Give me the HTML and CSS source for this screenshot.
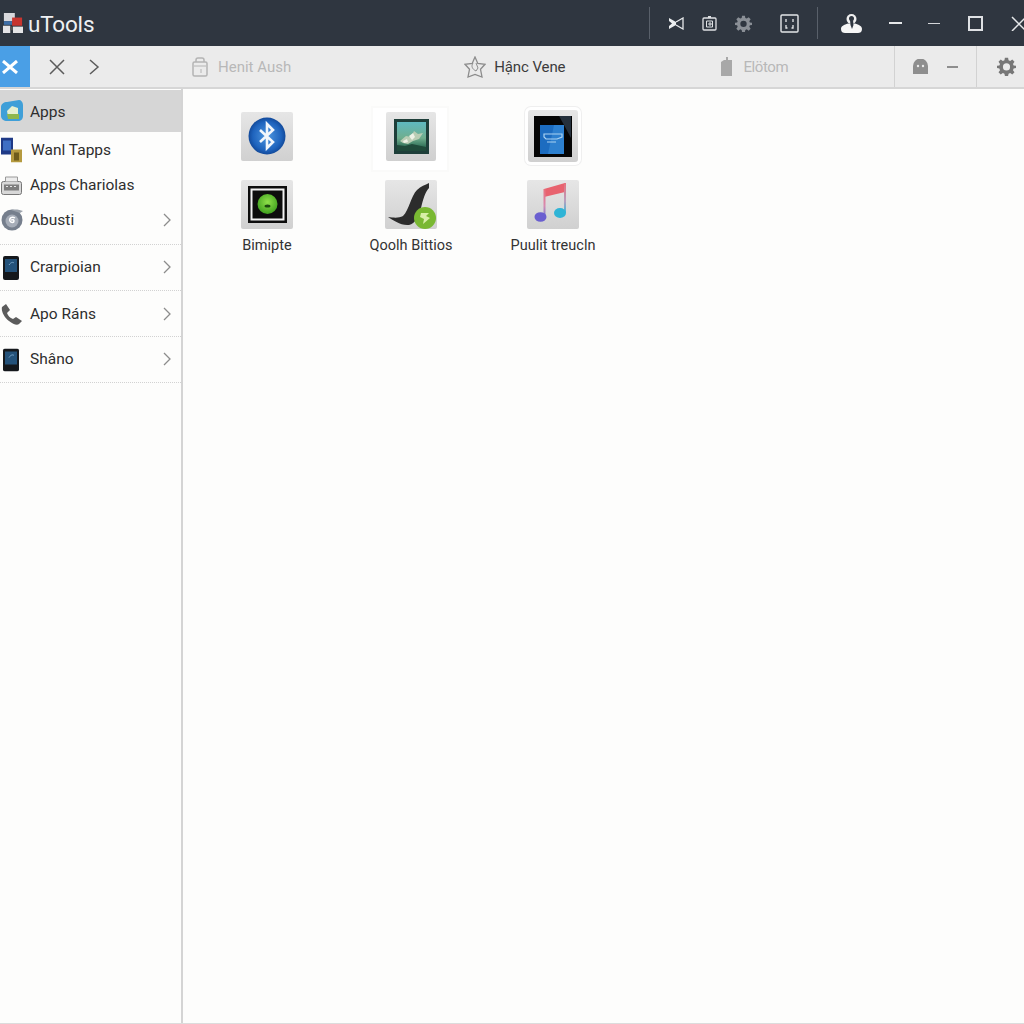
FILE: index.html
```html
<!DOCTYPE html>
<html lang="en">
<head>
<meta charset="utf-8">
<title>uTools</title>
<link rel="stylesheet" href="styles.css">
</head>
<body>
<div class="app">
  <header class="titlebar">
    <div class="brand">
      <svg class="logo" width="20" height="20" viewBox="0 0 22 22"><rect x="1" y="0" width="12" height="9" fill="#d8d8dc"/><rect x="1" y="9" width="9" height="4" fill="#3e6fa8"/><rect x="10" y="5" width="11" height="9" fill="#c8352f"/><rect x="0" y="14" width="8" height="8" fill="#e4e4e6"/><rect x="11" y="15" width="11" height="7" fill="#e4e4e6"/><rect x="8" y="15" width="3" height="4" fill="#555"/></svg>
      <span class="brand-name">uTools</span>
    </div>
    <div class="title-tools">
      <span class="vline"></span>
      <svg class="t1" width="16" height="13" viewBox="0 0 16 13"><path d="M1 1l7 4v3l-7 4V9l3-2.500L1 4z" fill="#eceef0"/><path d="M8 5l7-4v11L8 8" fill="none" stroke="#e6e8ea" stroke-width="1.300"/></svg>
      <svg class="t2" width="15" height="16" viewBox="0 0 15 16"><rect x="1" y="3" width="13" height="12" rx="1" fill="none" stroke="#dfe1e4" stroke-width="1.300"/><path d="M4.500 6h6v6h-6zM7 8h2v2H7z" fill="none" stroke="#dfe1e4"/><path d="M6 1h3v2H6z" fill="#dfe1e4"/></svg>
      <svg class="t3" width="17" height="17" viewBox="0 0 24 24"><path fill="#8a8f96" fill-rule="evenodd" d="M10 1h4l.6 3.200 2 .8L19.300 3.200l2.800 2.800L20.200 8.700l.8 2L24 11v3l-3 .6-.8 2 1.900 2.700-2.800 2.800-2.700-1.900-2 .8L14 24h-4l-.6-3-2-.8-2.700 1.900-2.800-2.800 1.900-2.700-.8-2L0 14v-3l3-.3.8-2L1.900 6l2.800-2.800L7.400 5l2-.8zM12 8a4.500 4.500 0 1 0 0 9 4.500 4.500 0 0 0 0-9z"/></svg>
      <svg class="t4" width="19" height="19" viewBox="0 0 19 19"><rect x="1" y="1" width="17" height="17" rx="1" fill="none" stroke="#e4e6e8" stroke-width="1.400"/><path d="M6 5v3M13 5v3M6 11v3h1.500M13 11v3h-1.500" stroke="#e4e6e8" stroke-width="1.300" fill="none"/></svg>
      <span class="vline vline2"></span>
      <svg class="t5" width="23" height="19" viewBox="0 0 23 19"><path d="M1 15c0-3 3-4 7-5.500h7c4 1.500 7 2.500 7 5.500 0 3-2 4-4 4H5c-2 0-4-1-4-4z" fill="#f6f6f6"/><ellipse cx="11.500" cy="5" rx="5" ry="5" fill="#f0f0f0"/><ellipse cx="11.500" cy="4.500" rx="2.500" ry="2.500" fill="#2f3640"/><path d="M10 6h3l.5 5-1.500 4-1.500-4z" fill="#2f3640"/></svg>
      <span class="dash"></span>
      <span class="dash2"></span>
      <span class="square"></span>
      <svg class="close" width="15" height="15" viewBox="0 0 15 15"><path d="M1 1l14 14M15 1L1 15" stroke="#e6e8ea" stroke-width="1.500"/></svg>
    </div>
  </header>

  <nav class="toolbar">
    <div class="close-tab"><svg width="16" height="14" viewBox="0 0 16 14"><path d="M1 1l14 12M15 1L1 13" stroke="#fff" stroke-width="3"/></svg></div>
    <svg class="nav-x" width="16" height="16" viewBox="0 0 16 16"><path d="M1 1l14 14M15 1L1 15" stroke="#5b5b5b" stroke-width="1.500"/></svg>
    <svg class="nav-next" width="11" height="16" viewBox="0 0 11 16"><path d="M1 1l8 7-8 7" fill="none" stroke="#5b5b5b" stroke-width="1.500"/></svg>
    <div class="tab tab-a">
      <svg width="16" height="20" viewBox="0 0 16 20"><path d="M4 5V3a2 2 0 0 1 2-2h4a2 2 0 0 1 2 2v2" fill="none" stroke="#b4b4b4" stroke-width="1.500"/><rect x="1" y="5" width="14" height="14" rx="1.500" fill="none" stroke="#b4b4b4" stroke-width="1.500"/><path d="M2 9h12M9 12v4" stroke="#b4b4b4"/></svg>
      <span class="faded">Henit Aush</span>
    </div>
    <div class="tab tab-b">
      <svg width="22" height="22" viewBox="0 0 22 22"><path d="M11 1l2.800 6.500L21 8.300l-4.500 5L18 21l-7-2.500L4 21l1.500-7.700L1 8.300l7.200-.8z" fill="none" stroke="#8c8c8c" stroke-width="1.300"/><path d="M9 7c-2 3-1 6 3 8l2-3-2-5" fill="none" stroke="#8c8c8c"/></svg>
      <span>Hậnc Vene</span>
    </div>
    <div class="tab tab-c">
      <svg width="13" height="20" viewBox="0 0 13 20"><path d="M6 0h2v3H6z" fill="#a8a8a8"/><path d="M1 5l3-2h8v16H1z" fill="#a8a8a8"/></svg>
      <span class="faded">Elötom</span>
    </div>
    <div class="tool-end">
      <svg width="15" height="15" viewBox="0 0 15 15"><path d="M0 15V7a7.500 7.500 0 0 1 15 0v8z" fill="#8e8e8e"/><circle cx="5" cy="7" r="1.200" fill="#ebebeb"/><circle cx="10" cy="7" r="1.200" fill="#ebebeb"/></svg>
      <span class="mini-dash"></span>
    </div>
    <div class="tool-gear">
      <svg width="19" height="19" viewBox="0 0 24 24"><path fill="#777" fill-rule="evenodd" d="M10 1h4l.6 3.200 2 .8L19.300 3.200l2.800 2.800L20.200 8.700l.8 2L24 11v3l-3 .6-.8 2 1.900 2.700-2.800 2.800-2.700-1.900-2 .8L14 24h-4l-.6-3-2-.8-2.700 1.900-2.800-2.800 1.900-2.700-.8-2L0 14v-3l3-.3.8-2L1.900 6l2.800-2.800L7.400 5l2-.8zM12 8a4.500 4.500 0 1 0 0 9 4.500 4.500 0 0 0 0-9z"/></svg>
    </div>
  </nav>

  <div class="main">
    <aside class="sidebar">
      <div class="row row-active">
        <svg class="ico" width="22" height="22" viewBox="0 0 22 22"><path d="M0 7c0-3 3-5 6-5l12-2c2 0 4 2 4 5v11c0 3-2 5-5 5H6c-3 0-6-2-6-5z" fill="#3f9fd8"/><path d="M6 11l5-5 6 2v8H7z" fill="#e6efd0"/><path d="M6 14h12v5H7z" fill="#8fb74c"/></svg>
        <span>Apps</span>
      </div>
      <div class="row row-wanl">
        <svg class="ico" width="22" height="25" viewBox="0 0 22 25"><rect x="0" y="0" width="12" height="17" fill="#1f3a86"/><rect x="2" y="3" width="8" height="10" fill="#3f6fc4"/><rect x="10" y="12" width="11" height="13" fill="#b59a3f"/><rect x="13" y="15" width="5" height="8" fill="#6f5c1c"/></svg>
        <span class="wanl-text">Wanl Tapps</span>
      </div>
      <div class="row row-charts">
        <svg class="ico" width="21" height="21" viewBox="0 0 21 21"><rect x="0.500" y="7" width="20" height="13" rx="2" fill="#d8d8d8" stroke="#777"/><rect x="3" y="10" width="15" height="6" fill="#7d7d7d"/><path d="M4.500 7V2.500h12V7" fill="#ececec" stroke="#999"/><path d="M5 12h2M9 12h2M13 12h2" stroke="#e6e6e6"/></svg>
        <span>Apps Chariolas</span>
      </div>
      <div class="row row-abusti">
        <svg class="ico" width="22" height="22" viewBox="0 0 22 22"><circle cx="11" cy="11" r="10.500" fill="#767f8d"/><path d="M10 1c5-1 9 0 12 1l-3 2z" fill="#9aa1ab"/><circle cx="11" cy="12" r="6.500" fill="#a6adb8"/><path d="M14 9c-3-2-6 0-5 3 1 2 4 2 4 0s-2-1-3-1" fill="none" stroke="#fff" stroke-width="1.500"/></svg>
        <span>Abusti</span>
        <svg class="chev" width="9" height="14" viewBox="0 0 9 14"><path d="M1 1l6 6-6 6" fill="none" stroke="#8c8c8c" stroke-width="1.300"/></svg>
      </div>
      <div class="row row-rule row-c">
        <svg class="ico" width="19" height="24" viewBox="0 0 19 24"><rect x="2" y="0" width="16" height="24" rx="2" fill="#15181c"/><rect x="4" y="3" width="12" height="13" fill="#24527a"/><path d="M8 9c2-3 4-3 5-2" stroke="#79a6c9" fill="none"/></svg>
        <span>Crarpioian</span>
        <svg class="chev" width="9" height="14" viewBox="0 0 9 14"><path d="M1 1l6 6-6 6" fill="none" stroke="#8c8c8c" stroke-width="1.300"/></svg>
      </div>
      <div class="row row-rule row-c">
        <svg class="ico" width="22" height="22" viewBox="0 0 22 22"><path d="M1 4l4-3 4 6-3 3c1 3 3 5 6 6l3-2 6 4-3 3c-2 2-6 0-10-3C3 14 0 8 1 4z" fill="#5c5c5c"/></svg>
        <span>Apo Ráns</span>
        <svg class="chev" width="9" height="14" viewBox="0 0 9 14"><path d="M1 1l6 6-6 6" fill="none" stroke="#8c8c8c" stroke-width="1.300"/></svg>
      </div>
      <div class="row row-rule row-c">
        <svg class="ico" width="19" height="23" viewBox="0 0 19 23"><rect x="2" y="0" width="16" height="23" rx="2" fill="#15181c"/><rect x="4" y="3" width="12" height="13" fill="#24527a"/><path d="M8 9c2-3 4-3 5-2" stroke="#79a6c9" fill="none"/></svg>
        <span>Shâno</span>
        <svg class="chev" width="9" height="14" viewBox="0 0 9 14"><path d="M1 1l6 6-6 6" fill="none" stroke="#8c8c8c" stroke-width="1.300"/></svg>
      </div>
    </aside>

    <main class="content">
      <div class="grid">
        <div class="cell">
          <div class="tile">
            <svg class="bt-icon" width="38" height="38" viewBox="0 0 38 38"><defs><radialGradient id="bt" cx="50%" cy="50%" r="55%"><stop offset="0" stop-color="#4f97e0"/><stop offset=".7" stop-color="#1e63bd"/><stop offset="1" stop-color="#0d3f8c"/></radialGradient></defs><circle cx="19" cy="19" r="18.500" fill="url(#bt)"/><path d="M12 13l13 12-6 6V7l6 6-13 12" fill="none" stroke="#f2f6fb" stroke-width="2.600"/></svg>
          </div>
        </div>
        <div class="cell">
          <div class="tile tile-halo">
            <svg width="35" height="35" viewBox="0 0 35 35"><defs><linearGradient id="sky" x1="0" y1="0" x2="0" y2="1"><stop offset="0" stop-color="#5fb9c0"/><stop offset=".55" stop-color="#6fae8e"/><stop offset="1" stop-color="#14543f"/></linearGradient></defs><rect width="35" height="35" fill="#1e3f3a"/><rect x="3" y="3" width="29" height="29" fill="url(#sky)"/><path d="M6 22l6-5 5 1 3-6 4 3 5-1-4 6-6 2-5 3-5-1z" fill="#b9cdb4"/><path d="M15 17l4-3 2 4-3 3zM9 22l4-2 1 3-4 1z" fill="#eef2e6"/><path d="M3 26l8 1 7-2 14 3v4H3z" fill="#1f4a3a"/></svg>
          </div>
        </div>
        <div class="cell">
          <div class="tile tile-ring">
            <svg width="38" height="41" viewBox="0 0 38 41"><rect width="38" height="41" fill="#050505"/><path d="M25 0h12v22L30 9z" fill="#25303c"/><path d="M6 9h19l5-0v29H6z" fill="#1c6cc0"/><path d="M20 9h10v29H14z" fill="#2d80cf"/><path d="M10 18h18v3l-5 2H12l-2-2zM13 26h9" fill="none" stroke="#a9d2f2" stroke-width="1.200"/></svg>
          </div>
        </div>
        <div class="cell">
          <div class="tile">
            <svg width="39" height="37" viewBox="0 0 39 37"><defs><radialGradient id="gr" cx="50%" cy="40%" r="60%"><stop offset="0" stop-color="#8fe04a"/><stop offset="1" stop-color="#3fa01e"/></radialGradient></defs><rect width="39" height="37" fill="#0d0d0d"/><rect x="3.500" y="3.500" width="32" height="30" fill="none" stroke="#f2f2f2" stroke-width="2"/><circle cx="19.500" cy="18" r="10" fill="url(#gr)"/><ellipse cx="19.500" cy="20" rx="3" ry="1.600" fill="#1d4a10"/></svg>
          </div>
          <span class="label">Bimipte</span>
        </div>
        <div class="cell">
          <div class="tile">
            <svg width="52" height="50" viewBox="0 0 52 50"><path d="M3 37c7 1 11 1 15-1 6-6 8-20 14-26 4-4 8-5 12-7v5c-4 4-6 12-8 20-2 8-6 16-12 17-8 1-16-5-21-8z" fill="#2c2c2c"/><circle cx="40" cy="38" r="11" fill="#79b832"/><path d="M36 33h8l-3 3 4 2-7 6 1-5-4-2z" fill="#d8eea8"/></svg>
          </div>
          <span class="label">Qoolh Bittios</span>
        </div>
        <div class="cell">
          <div class="tile">
            <svg width="52" height="50" viewBox="0 0 52 50"><defs><linearGradient id="st" x1="0" y1="0" x2="0" y2="1"><stop offset="0" stop-color="#e8707c"/><stop offset=".6" stop-color="#d88bb0"/><stop offset="1" stop-color="#6f80d8"/></linearGradient><linearGradient id="st2" x1="0" y1="0" x2="0" y2="1"><stop offset="0" stop-color="#e8707c"/><stop offset=".6" stop-color="#b8a0c0"/><stop offset="1" stop-color="#3fb8d8"/></linearGradient></defs><path d="M17 9l21-6v9l-21 5z" fill="#e8636f"/><rect x="16.500" y="9" width="2" height="28" fill="url(#st)"/><rect x="37" y="3" width="2" height="30" fill="url(#st2)"/><ellipse cx="13.500" cy="37" rx="6" ry="4.800" fill="#6a5fd0"/><ellipse cx="33" cy="33" rx="6" ry="5" fill="#2fb4d6"/></svg>
          </div>
          <span class="label">Puulit treucln</span>
        </div>
      </div>
    </main>
  </div>
</div>
</body>
</html>
```
FILE: styles.css
```css
* { box-sizing: border-box; }
html, body { margin: 0; height: 100%; }
body { font-family: Roboto, "Liberation Sans", sans-serif; color: #2e2e2e; background: #fdfdfc; overflow: hidden; }
.app { display: flex; flex-direction: column; height: 1024px; width: 1024px; }

.titlebar { height: 46px; flex: none; background: #2f3640; display: flex; align-items: center; }
.brand { display: flex; align-items: center; gap: 5px; padding-left: 3px; }
.brand-name { font-size: 22.500px; color: #eef0f2; font-weight: 400; letter-spacing: -0.2px; padding-top: 2px; }
.title-tools { margin-left: auto; display: flex; align-items: center; height: 100%; width: 375px; flex: none; overflow: hidden; }
.vline { width: 1px; height: 32px; background: #59606a; flex: none; }
.t1 { margin-left: 18px; flex: none; }
.t2 { margin-left: 18px; flex: none; }
.t3 { margin-left: 18px; flex: none; }
.t4 { margin-left: 28px; flex: none; }
.vline2 { margin-left: 18px; }
.t5 { margin-left: 22px; flex: none; }
.dash { width: 13px; height: 2px; background: #e6e8ea; margin-left: 26px; flex: none; }
.dash2 { width: 12px; height: 1px; background: #d4d6d9; margin-left: 26px; flex: none; }
.square { width: 15px; height: 15px; border: 2px solid #dfe1e4; margin-left: 28px; flex: none; }
.close { margin-left: 28px; flex: none; }

.toolbar { height: 43px; flex: none; background: #ebebeb; border-bottom: 2px solid #d6d6d6; display: flex; align-items: center; font-size: 15px; }
.close-tab { width: 30px; height: 100%; background: #4a9fe6; display: flex; align-items: center; justify-content: center; padding-right: 10px; flex: none; }
.nav-x { margin-left: 19px; flex: none; }
.nav-next { margin-left: 24px; flex: none; }
.tab { display: flex; align-items: center; gap: 10px; flex: none; }
.tab-a { margin-left: 92px; }
.tab-b { margin-left: 173px; gap: 8px; color: #3c3c3c; letter-spacing: -0.1px; }
.tab-c { margin-left: 155px; letter-spacing: -0.4px; }
.faded { color: #b8b8b8; }
.tool-end { margin-left: auto; width: 82px; height: 100%; border-left: 1px solid #d2d2d2; display: flex; align-items: center; gap: 19px; padding-left: 18px; flex: none; }
.mini-dash { width: 11px; height: 2px; background: #8e8e8e; }
.tool-gear { width: 48px; height: 100%; border-left: 1px solid #d2d2d2; display: flex; align-items: center; padding-left: 20px; flex: none; }

.main { flex: 1; display: flex; min-height: 0; border-bottom: 1px solid #dcdcdc; }
.sidebar { width: 183px; flex: none; background: #fdfdfc; border-right: 2px solid #d4d4d4; padding-top: 1px; font-size: 15.500px; }
.row { display: flex; align-items: center; padding-right: 9px; position: relative; }
.row span { margin-left: 30px; flex: 1; }
.ico { position: absolute; left: 1px; top: 50%; transform: translateY(-50%); }
.row-active { height: 42px; background: #d6d6d6; padding-top: 1px; }
.row-wanl { height: 36px; }
.row-charts { height: 34px; }
.row-abusti { height: 36px; margin-bottom: 6px; }
.wanl-text { margin-left: 31px !important; }
.row-c { height: 46px; }
.row-c:nth-child(5) { padding-bottom: 1px; }
.row-rule { border-top: 1px dotted #d2d2d2; }
.row-c:last-child { border-bottom: 1px dotted #d2d2d2; height: 47px; padding-bottom: 1px; }
.chev { flex: none; }

.content { flex: 1; padding: 23px 0 0 12px; position: relative; z-index: 0; }
.grid { display: grid; grid-template-columns: 144px 144px 140px; grid-template-rows: 68px auto; justify-items: center; }
.cell { display: flex; flex-direction: column; align-items: center; }
.tile { width: 52px; height: 49px; background: linear-gradient(#e6e6e6, #d0d0d0); display: flex; align-items: center; justify-content: center; border-radius: 2px; }
.bt-icon { margin-top: -2px; }
.tile-halo { width: 50px; position: relative; }
.tile-halo::before { content: ""; position: absolute; inset: -6px -13px -11px -15px; background: #fff; border: 2px solid #fafaf9; z-index: -1; }
.tile-ring { width: 50px; height: 52px; margin-top: -2px; box-shadow: 0 0 0 3px #fff, 0 0 0 4px #efefef; border-radius: 3px; }
.label { font-size: 14.500px; margin-top: 8px; color: #333; white-space: nowrap; }
```
